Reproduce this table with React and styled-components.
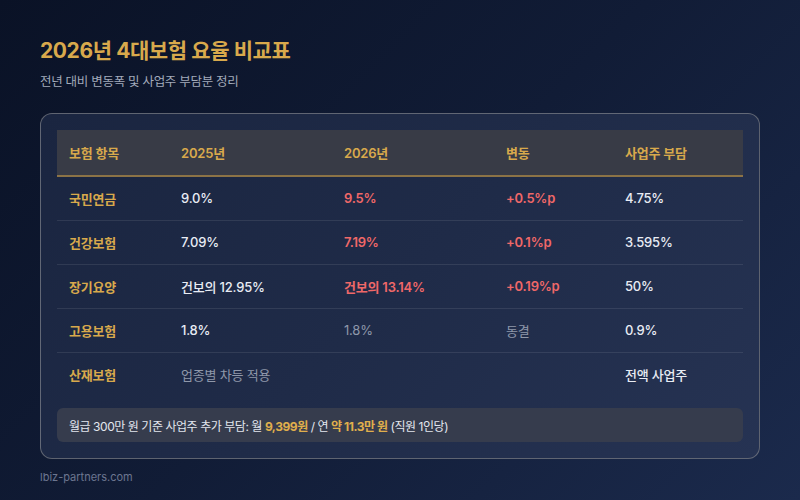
import styled, { createGlobalStyle } from "styled-components";

const GlobalStyle = createGlobalStyle`
    * { box-sizing: border-box; }
    html, body { margin: 0; padding: 0; }
    body {
        font-family: "Inter", "Noto Sans CJK KR", sans-serif;
        background: #0c1428;
    }
`;

const rows = [
    { name: "국민연금", prev: "9.0%", next: "9.5%", diff: "+0.5%p", boss: "4.75%", up: true },
    { name: "건강보험", prev: "7.09%", next: "7.19%", diff: "+0.1%p", boss: "3.595%", up: true },
    { name: "장기요양", prev: "건보의 12.95%", next: "건보의 13.14%", diff: "+0.19%p", boss: "50%", up: true },
    { name: "고용보험", prev: "1.8%", next: "1.8%", diff: "동결", boss: "0.9%", up: false },
    { name: "산재보험", prev: "업종별 차등 적용", next: "", diff: "", boss: "전액 사업주", up: false, muted: true },
];

const App = () => {
    return (
        <>
            <GlobalStyle />
            <Page>
                <Title>2026년 4대보험 요율 비교표</Title>
                <Subtitle>전년 대비 변동폭 및 사업주 부담분 정리</Subtitle>
                <Card>
                    <Table>
                        <colgroup>
                            <col style={{ width: 112 }} />
                            <col style={{ width: 163 }} />
                            <col style={{ width: 162 }} />
                            <col style={{ width: 119 }} />
                            <col style={{ width: 130 }} />
                        </colgroup>
                        <thead>
                            <tr>
                                <Th>보험 항목</Th>
                                <Th>2025년</Th>
                                <Th>2026년</Th>
                                <Th>변동</Th>
                                <Th>사업주 부담</Th>
                            </tr>
                        </thead>
                        <tbody>
                            {rows.map((r, i) => (
                                <Row key={r.name} $last={i === rows.length - 1}>
                                    <Name>{r.name}</Name>
                                    <Cell $tone={r.muted ? "muted" : "plain"}>{r.prev}</Cell>
                                    <Cell $tone={r.up ? "up" : "muted"}>{r.next}</Cell>
                                    <Cell $tone={r.up ? "up" : "muted"}>{r.diff}</Cell>
                                    <Cell $tone="plain">{r.boss}</Cell>
                                </Row>
                            ))}
                        </tbody>
                    </Table>
                    <Note>
                        월급 300만 원 기준 사업주 추가 부담: 월 <Em>9,399원</Em> / 연{" "}
                        <Em>약 11.3만 원</Em> (직원 1인당)
                    </Note>
                </Card>
                <Footer>lbiz-partners.com</Footer>
            </Page>
        </>
    );
};

const Page = styled.div`
    width: 800px;
    height: 500px;
    padding: 37px 40px 0;
    background: linear-gradient(135deg, #0a1226 0%, #111c36 50%, #1b2a4c 100%);
    overflow: hidden;
`;

const Title = styled.h1`
    margin: 0;
    font-size: 21px;
    line-height: 28px;
    font-weight: 700;
    color: #d8a94c;
    letter-spacing: -0.4px;
`;

const Subtitle = styled.p`
    margin: 8px 0 0;
    font-size: 12.5px;
    line-height: 18px;
    color: #a3abbb;
    letter-spacing: -0.3px;
`;

const Card = styled.div`
    margin-top: 22px;
    width: 720px;
    padding: 16px;
    border: 1px solid rgba(150, 150, 150, 0.55);
    border-radius: 12px;
    background: linear-gradient(135deg, #1a2540 0%, #1f2b48 50%, #263353 100%);
`;

const Table = styled.table`
    width: 686px;
    border-collapse: collapse;
    table-layout: fixed;
    font-size: 13px;
    letter-spacing: -0.2px;
`;

const Th = styled.th`
    height: 46px;
    padding: 0 12px;
    text-align: left;
    font-weight: 600;
    color: #d8a94c;
    background: #383b46;
    border-bottom: 2px solid #8c7346;
`;

const Row = styled.tr`
    height: 44px;
    border-bottom: ${(p) => (p.$last ? "none" : "1px solid rgba(255, 255, 255, 0.09)")};
`;

const Name = styled.td`
    padding: 0 12px;
    font-weight: 600;
    color: #d8a94c;
`;

const tones = {
    plain: "color: #e8ecf4; font-weight: 500;",
    up: "color: #f06868; font-weight: 600;",
    muted: "color: #8f98aa; font-weight: 400;",
};

const Cell = styled.td`
    padding: 0 12px;
    ${(p) => tones[p.$tone]}
`;

const Note = styled.div`
    margin-top: 12px;
    height: 34px;
    padding: 0 12px;
    display: flex;
    align-items: center;
    border-radius: 6px;
    background: #363c4d;
    font-size: 12px;
    letter-spacing: -0.45px;
    color: #e2e6ee;
    white-space: pre;
`;

const Em = styled.span`
    color: #e0af4c;
    font-weight: 700;
`;

const Footer = styled.div`
    margin-top: 11px;
    font-size: 11px;
    color: #6c7690;
`;

export default App;
